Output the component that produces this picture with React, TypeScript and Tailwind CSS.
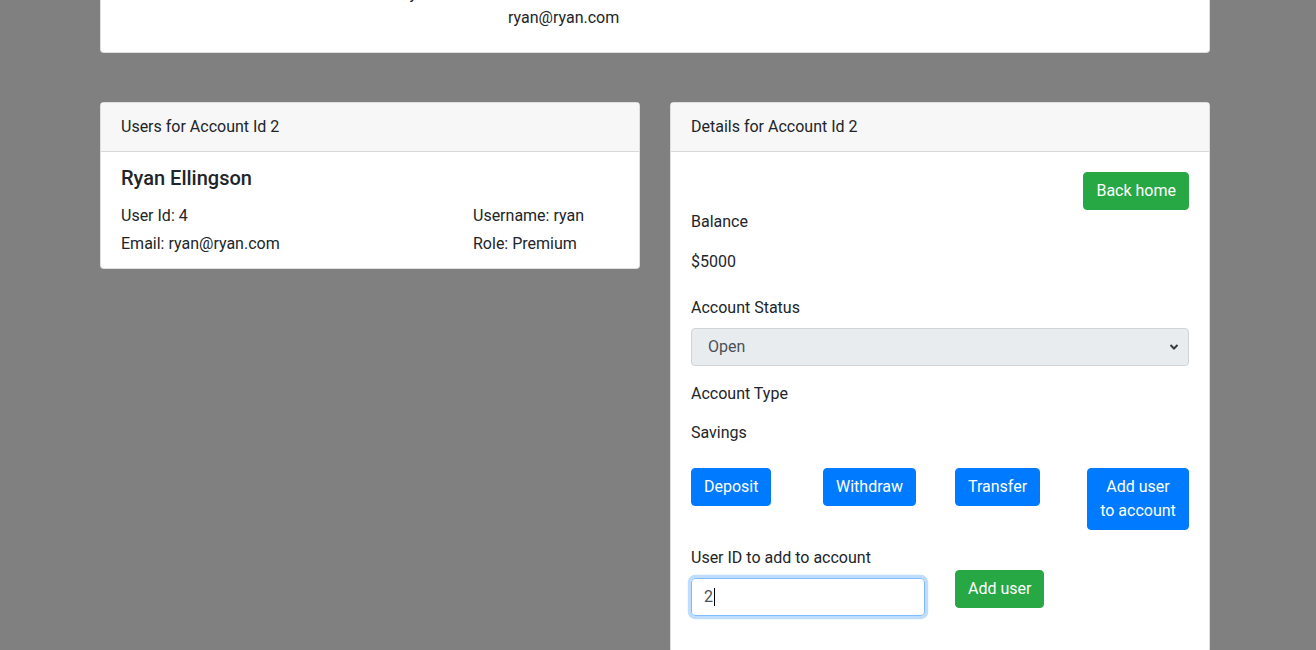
export default function App() {
  return (
    <div className="min-h-[650px] bg-[#808080] text-[16px] leading-6 text-[#212529] font-['Roboto',sans-serif]">
      <div className="ml-[100px] w-[1110px]">
        {/* account summary card, scrolled mostly out of view */}
        <div className="-mt-[39px] rounded border border-black/[.125] bg-white px-5 pt-5 pb-[22px]">
          <div className="w-[296px] text-right">Account Summary</div>
          <div className="pl-[387px]">ryan@ryan.com</div>
        </div>

        <div className="mt-[49px] flex gap-[30px]">
          <div className="w-[540px] self-start rounded border border-black/[.125] bg-white">
            <div className="border-b border-black/[.125] bg-[#f7f7f7] px-5 py-3">
              Users for Account Id 2
            </div>
            <div className="px-5 pt-[14px] pb-3">
              <h5 className="text-[20px] font-medium leading-6">Ryan Ellingson</h5>
              <div className="mt-[14px] flex flex-col gap-1">
                <div className="flex">
                  <div className="w-[352px]">User Id: 4</div>
                  <div>Username: ryan</div>
                </div>
                <div className="flex">
                  <div className="w-[352px]">Email: ryan@ryan.com</div>
                  <div>Role: Premium</div>
                </div>
              </div>
            </div>
          </div>

          <div className="w-[540px] rounded border border-black/[.125] bg-white">
            <div className="border-b border-black/[.125] bg-[#f7f7f7] px-5 py-3">
              Details for Account Id 2
            </div>
            <div className="px-5 pt-5 pb-5">
              <div className="flex justify-end">
                <button className="rounded border border-[#28a745] bg-[#28a745] px-3 py-1.5 text-white">
                  Back home
                </button>
              </div>
              <p>Balance</p>
              <p className="mt-4">$5000</p>
              <label className="mt-[22px] block">Account Status</label>
              <div className="relative mt-2">
                <select
                  disabled
                  className="h-[38px] w-full appearance-none rounded border border-[#ced4da] bg-[#e9ecef] px-4 text-[#495057]"
                >
                  <option>Open</option>
                </select>
                <svg
                  className="pointer-events-none absolute right-[10px] top-[15px]"
                  width="10"
                  height="8"
                  viewBox="0 0 10 8"
                >
                  <path d="M1.5 2 L5 5.5 L8.5 2" fill="none" stroke="#343a40" strokeWidth="2" />
                </svg>
              </div>
              <p className="mt-4">Account Type</p>
              <p className="mt-[15px]">Savings</p>

              <div className="mt-[23px] grid grid-cols-4 gap-x-[30px] items-start">
                <button className="justify-self-start rounded border border-[#007bff] bg-[#007bff] px-3 py-1.5 text-white">
                  Deposit
                </button>
                <button className="justify-self-start rounded border border-[#007bff] bg-[#007bff] px-3 py-1.5 text-white">
                  Withdraw
                </button>
                <button className="justify-self-start rounded border border-[#007bff] bg-[#007bff] px-3 py-1.5 text-white">
                  Transfer
                </button>
                <button className="w-full rounded border border-[#007bff] bg-[#007bff] px-3 py-1.5 text-white">
                  Add user to account
                </button>
              </div>

              <div className="mt-4 mb-4 grid grid-cols-2 gap-x-[30px]">
                <div>
                  <label className="block">User ID to add to account</label>
                  <div className="mt-2 flex h-[38px] items-center rounded border border-[#80bdff] px-3 text-[#495057] shadow-[0_0_0_3.2px_rgba(0,123,255,0.25)]">
                    2<span className="ml-px h-[18px] w-px bg-black" />
                  </div>
                </div>
                <div className="pt-6">
                  <button className="rounded border border-[#28a745] bg-[#28a745] px-3 py-1.5 text-white">
                    Add user
                  </button>
                </div>
              </div>
            </div>
          </div>
        </div>
      </div>
    </div>
  );
}
